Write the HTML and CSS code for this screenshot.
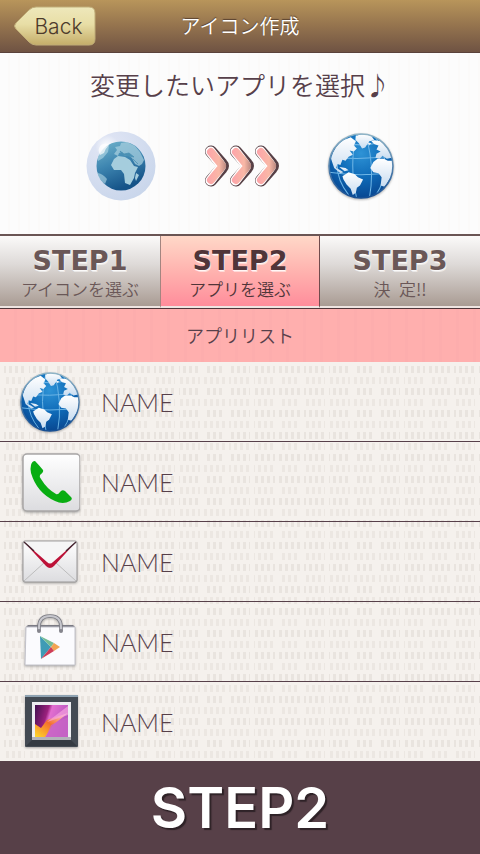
FILE: index.html
```html
<!DOCTYPE html>
<html lang="ja">
<head>
<meta charset="utf-8">
<meta name="viewport" content="width=device-width, initial-scale=1">
<title>アイコン作成</title>
<link rel="stylesheet" href="styles.css">
</head>
<body>
<svg class="defs" aria-hidden="true">
  <defs>
    <radialGradient id="sea" cx=".5" cy=".3" r=".75">
      <stop offset="0" stop-color="#2e93d6"/><stop offset=".5" stop-color="#0f6bb8"/><stop offset="1" stop-color="#07428c"/>
    </radialGradient>
    <linearGradient id="land" x2="0" y2="1">
      <stop offset="0" stop-color="#fff"/><stop offset="1" stop-color="#c8dcf0"/>
    </linearGradient>
    <linearGradient id="rim" x2="0" y2="1">
      <stop offset="0" stop-color="#8fb4c6"/><stop offset="1" stop-color="#164f94"/>
    </linearGradient>
    <clipPath id="disc"><circle cx="32" cy="32" r="31"/></clipPath>
    <symbol id="globe" viewBox="0 0 64 64">
      <circle cx="32" cy="32" r="31" fill="url(#sea)"/>
      <g clip-path="url(#disc)">
        <path d="M0 38Q32 43 64 38M2 23Q31 27 62 22M13 9Q32 14 51 9M28 0Q20 31 28 64M36 0Q46 32 40 64M18 4Q-1 34 20 60M46 4Q65 32 46 61" fill="none" stroke="#6fb6e6" stroke-width="1"/>
        <g fill="url(#land)">
          <path d="M3 25Q6 12 15 7L22 4L27 8L25 12L28 15L25 18L21 17L24 21L20 23L17 27L14 26L12 31L9 30L8 34L12 36L15 38L12 39L6 34L4 28Z"/>
          <path d="M27 3Q36-1 42 3L45 7L40 8L36 14L33 15L30 10L27 7Z"/>
          <path d="M14 42L20 38L26 40L29 43L34 45L31 51L28 53L27 58L24 60L22 54L18 50L15 45Z"/>
          <path d="M11 33L17 34L20 36L16 37Z"/>
          <path d="M45 7L52 8L59 17L62 24L57 25L53 22L50 25L46 24L47 20L51 18L47 16L49 12L45 11L42 8Z"/>
          <path d="M44 28L48 25L54 25L58 27L63 27L64 37L60 44L55 52L51 51L52 43L49 39L44 38L41 34Z"/>
          <path d="M38 9L42 10L40 12Z"/>
        </g>
      </g>
      <circle cx="32" cy="32" r="31" fill="none" stroke="url(#rim)" stroke-width="1.5"/>
    </symbol>

    <linearGradient id="sea2" x2=".4" y2="1">
      <stop offset="0" stop-color="#75b6cd"/><stop offset=".5" stop-color="#3e86b1"/><stop offset="1" stop-color="#155388"/>
    </linearGradient>
    <radialGradient id="halo" cx=".3" cy=".22" r=".85">
      <stop offset="0" stop-color="#fff"/><stop offset=".2" stop-color="#dde3f3"/><stop offset="1" stop-color="#c9d6eb"/>
    </radialGradient>
    <linearGradient id="arrow" gradientUnits="userSpaceOnUse" x1="2" y1="0" x2="24" y2="0">
      <stop offset="0" stop-color="#fda2aa"/><stop offset=".6" stop-color="#f9b8a6"/><stop offset="1" stop-color="#a77b76"/>
    </linearGradient>
    <linearGradient id="tile" x2="0" y2="1">
      <stop offset="0" stop-color="#fff"/><stop offset="1" stop-color="#dcdcdf"/>
    </linearGradient>
    <linearGradient id="photo" x1="0" x2="1" y2=".3">
      <stop offset="0" stop-color="#40104f"/><stop offset=".4" stop-color="#9b217d"/><stop offset=".5" stop-color="#e36ed0"/><stop offset="1" stop-color="#b958c0"/>
    </linearGradient>
    <linearGradient id="fire" x1="0" y1="1" x2="1" y2="0">
      <stop offset="0" stop-color="#ffd92b"/><stop offset=".5" stop-color="#f4702c"/><stop offset="1" stop-color="#ffd4e6"/>
    </linearGradient>
    <linearGradient id="metal" x2="0" y2="1">
      <stop offset="0" stop-color="#d3d3d8"/><stop offset="1" stop-color="#77777f"/>
    </linearGradient>
  </defs>
</svg>

<header class="topbar">
  <button class="back" type="button">
    <svg class="back-shape" viewBox="0 0 82 40" preserveAspectRatio="none" aria-hidden="true">
      <defs><linearGradient id="cream" x2="0" y2="1"><stop offset="0" stop-color="#eee8bb"/><stop offset=".45" stop-color="#e8dea6"/><stop offset="1" stop-color="#c4ad69"/></linearGradient></defs>
      <path d="M22 1H75Q81 1 81 7V33Q81 39 75 39H22Q18 39 15 36L2 23Q-1 20 2 17L15 4Q18 1 22 1Z" fill="url(#cream)" stroke="#c0ad78"/>
    </svg>
    <span class="back-label">Back</span>
  </button>
  <h1 class="title">アイコン作成</h1>
</header>

<main class="content">
  <section class="hero">
    <h2 class="prompt">変更したいアプリを選択♪</h2>
    <div class="preview">
      <svg class="preview-old" viewBox="0 0 70 70" role="img" aria-label="現在のアイコン">
        <circle cx="35" cy="35" r="34.5" fill="url(#halo)"/>
        <circle cx="35" cy="35" r="24.5" fill="url(#sea2)"/>
        <g fill="#a5cddd">
          <path d="M28 28L32 25L39 26L44 29L48 35L52 36L49 42L48 47L44 54L39 52L38 43L35 39L28 39L25 34Z"/>
          <path d="M28 23L31 19L29 16L34 15L35 12L41 11L49 15L54 21L58 29L56 33L53 35L49 33L46 27L42 24L39 25L36 21L33 22L32 25Z" opacity=".75"/>
          <path d="M50 42L53 44L50 50L49 47Z"/>
        </g>
        <path d="M34 20L38 23L43 22L48 26L43 25L37 24ZM47 28L52 33" fill="#4b91b4" stroke="#4b91b4" stroke-width=".8"/>
        <path d="M12 26Q14 20 19 16L23 15L22 21L17 27L12 30ZM12 42Q17 43 21 48L19 53Q13 49 11 41Z" fill="#b5dae8" opacity=".6"/>
        <path d="M14 24Q11 18 15 14Q20 11 23 14Q19 18 18 22Z" fill="#fff" opacity=".7"/>
      </svg>
      <svg class="preview-arrows" viewBox="0 0 76 42" aria-hidden="true">
        <defs>
          <g id="chevron">
            <path d="M7 6.500L18 19Q20 21 18 23L7 35.500" fill="none" stroke="#574046" stroke-width="12" stroke-linecap="round" stroke-linejoin="round"/>
            <path d="M6.500 6.500L16 19Q18 21 16 23L6.500 35.500" fill="none" stroke="#fff" stroke-width="10" stroke-linecap="round" stroke-linejoin="round"/>
            <path d="M7 7L17 19Q19 21 17 23L7 35" fill="none" stroke="url(#arrow)" stroke-width="8" stroke-linecap="round" stroke-linejoin="round"/>
          </g>
        </defs>
        <use href="#chevron"/><use href="#chevron" x="25"/><use href="#chevron" x="50"/>
      </svg>
      <svg class="preview-new shadowed" viewBox="0 0 64 64" role="img" aria-label="新しいアイコン"><use href="#globe"/></svg>
    </div>
  </section>

  <nav class="steps" aria-label="ステップ">
    <button class="step" type="button"><span class="step-name">STEP1</span><span class="step-text">アイコンを選ぶ</span></button>
    <button class="step step-active" type="button" aria-current="step"><span class="step-name">STEP2</span><span class="step-text">アプリを選ぶ</span></button>
    <button class="step" type="button"><span class="step-name">STEP3</span><span class="step-text">決&ensp;定!!</span></button>
  </nav>

  <section class="apps">
    <h2 class="apps-title">アプリリスト</h2>
    <ul class="app-list">
      <li><button class="app" type="button">
        <svg class="app-icon shadowed" viewBox="0 0 60 60" aria-hidden="true"><use href="#globe"/></svg>
        <span class="app-name">NAME</span></button></li>
      <li><button class="app" type="button">
        <svg class="app-icon shadowed" viewBox="0 0 60 60" aria-hidden="true">
          <rect x="3" y="2" width="57" height="57" rx="4" fill="url(#tile)" stroke="#a9a7a7" stroke-width="1.500"/>
          <path d="M11 13Q12 9 15 9Q18 12 23 18Q24 20 20 23Q19 25 21 27Q27 37 36 42Q38 43 40 40Q42 37 45 39L51 45Q53 47 50 49Q43 53 35 49Q17 41 11 21Q10 17 11 13Z" fill="#08ad12"/>
        </svg>
        <span class="app-name">NAME</span></button></li>
      <li><button class="app" type="button">
        <svg class="app-icon shadowed" viewBox="0 0 60 60" aria-hidden="true">
          <rect x="3" y="9" width="54" height="41" rx="2" fill="url(#tile)" stroke="#999797"/>
          <path d="M4 49L25 30M56 49L35 30" stroke="#bdbdbd"/>
          <path d="M4 10L26 32Q30 36 34 32L56 10Z" fill="#f6f6f6"/>
          <path d="M4 10L27 30Q30 33 33 30L56 10L34 34Q30 38 26 34Z" fill="#bd1238"/>
          <path d="M4 10L14 19M56 10L46 19" stroke="#462a34" stroke-width="1.500"/>
        </svg>
        <span class="app-name">NAME</span></button></li>
      <li><button class="app" type="button">
        <svg class="app-icon shadowed" viewBox="0 0 60 60" aria-hidden="true">
          <path d="M6 15L8 13H53L55 15Z" fill="#7b7b84"/>
          <path d="M6 15H55V53H5Z" fill="#fbfbfe" stroke="#c2c2ca"/>
          <path d="M19 19V15Q19 4 30 4Q41 4 41 15V19" fill="none" stroke="#77777f" stroke-width="3.500"/>
          <path d="M19 19V15Q19 4 30 4Q41 4 41 15V19" fill="none" stroke="#c6c6cc" stroke-width="2"/>
          <circle cx="19" cy="19" r="2" fill="#85858d"/><circle cx="41" cy="19" r="2" fill="#85858d"/>
          <path d="M20 24L31 35L21 47Z" fill="#3f9bb5"/>
          <path d="M20 24L34 31L31 35Z" fill="#75bc93"/>
          <path d="M34 31L40 35L34 39L31 35Z" fill="#f2a451"/>
          <path d="M21 47L31 35L34 39Z" fill="#cf3e58"/>
        </svg>
        <span class="app-name">NAME</span></button></li>
      <li><button class="app" type="button">
        <svg class="app-icon shadowed" viewBox="0 0 60 60" aria-hidden="true">
          <rect x="5" y="3" width="53" height="52" rx="1" fill="#434a53"/>
          <path d="M5 4H58" stroke="#8fa3b2" stroke-width="2"/>
          <path d="M6 54L13 47H50L57 54Z" fill="#343a42"/>
          <rect x="12" y="10" width="39" height="38" fill="#ededf1"/>
          <path d="M12 48H51V45H12Z" fill="#b2b2b9"/>
          <rect x="15" y="13" width="33" height="32" fill="url(#photo)"/>
          <path d="M15 45V32L21 36L27 28L48 21L34 32L25 45Z" fill="url(#fire)"/>
          <path d="M27 30L48 14V23Z" fill="#f7a1de" opacity=".7"/>
          <path d="M26 45L31 33L48 25V45Z" fill="#c865c5" opacity=".8"/>
        </svg>
        <span class="app-name">NAME</span></button></li>
    </ul>
  </section>
</main>

<footer class="footer">STEP2</footer>
</body>
</html>
```
FILE: styles.css
```css
* {
  box-sizing: border-box;
}

body {
  margin: 0;
  min-height: 100vh;
  display: flex;
  flex-direction: column;
  font-family: "Noto Sans CJK JP", sans-serif;
  font-weight: 350;
  color: #57404a;
  background: #f5f1ed;
}

button {
  margin: 0;
  padding: 0;
  border: 0;
  background: none;
  font: inherit;
  color: inherit;
  cursor: pointer;
}

h1, h2 {
  margin: 0;
  font-weight: 350;
}

.defs {
  position: absolute;
  width: 0;
  height: 0;
}

.topbar {
  display: grid;
  grid-template-columns: 1fr auto 1fr;
  align-items: center;
  height: 53px;
  padding: 0 14px;
  background: linear-gradient(#b8955b, #94734e 50%, #6f5343);
  border-bottom: 1px solid #5a423b;
}

.back {
  position: relative;
  justify-self: start;
  width: 82px;
  height: 40px;
  padding-left: 7px;
}

.back-shape {
  position: absolute;
  inset: 0;
  width: 100%;
  height: 100%;
}

.back-label {
  position: relative;
  font-family: Inter, sans-serif;
  font-weight: 300;
  font-size: 21px;
  color: #4d3b2c;
}

.title {
  font-size: 20px;
  line-height: 30px;
  color: #fff;
  text-shadow: 0 -1px 1px #57402f;
}

.hero {
  height: 181px;
  padding-top: 12px;
  background: repeating-linear-gradient(90deg, #fcfcfc 0 8px, #fbfaf9 8px 10px);
}

.prompt {
  font-size: 25px;
  line-height: 38px;
  text-align: center;
}

.preview {
  display: flex;
  align-items: center;
  justify-content: center;
  gap: 48px;
  height: 126px;
}

.preview-old {
  width: 70px;
  height: 70px;
}

.preview-new {
  width: 66px;
  height: 66px;
}

.preview-arrows {
  width: 76px;
  height: 42px;
}

.shadowed {
  filter: drop-shadow(0 1px 1px #77777799);
}

.steps {
  display: grid;
  grid-template-columns: repeat(3, 1fr);
  border-top: 2px solid #6a5554;
  border-bottom: 1px solid #4f3539;
}

.step {
  display: flex;
  flex-direction: column;
  align-items: center;
  height: 72px;
  padding-top: 9px;
  color: #6a5757;
  background: linear-gradient(#fbfaf9, #dedad8 40%, #a99b93);
  border-bottom: 2px solid #eee5e2;
}

.step-active {
  color: #503539;
  background: linear-gradient(#ffd8c8, #ffb3af 50%, #ff8d9b);
  border-left: 1px solid #a38580;
  border-right: 1px solid #704b4d;
}

.step-name {
  font-family: "DejaVu Sans", sans-serif;
  font-weight: 700;
  font-size: 27px;
  line-height: 31px;
  text-shadow: 0 1px 0 #ffffffcc, 1px 2px 0 #ffffff88;
}

.step-text {
  font-size: 17px;
  line-height: 26px;
}

.apps-title {
  height: 53px;
  font-size: 18px;
  line-height: 53px;
  text-align: center;
  background: repeating-linear-gradient(90deg, #ffafae 0 14px, #fdadad 14px 17px);
}

.app-list {
  margin: 0;
  padding: 0;
  list-style: none;
  background:
    linear-gradient(90deg, #f5f1ed 4px, transparent 4px) 0 0 / 25px 100%,
    conic-gradient(from 90deg at 3px 7px, transparent 75%, #e9e4df 0) 0 4px / 6px 22px,
    conic-gradient(from 90deg at 3px 7px, transparent 75%, #ece7e2 0) 3px 15px / 6px 22px;
}

.app {
  display: flex;
  align-items: center;
  gap: 21px;
  width: 100%;
  height: 80px;
  padding: 0 20px;
  text-align: left;
  border-bottom: 1px solid #57404a;
}

.app-list li:last-child .app {
  height: 79px;
  border-bottom: 0;
}

.app-icon {
  width: 60px;
  height: 60px;
}

.app-name {
  font-family: Lato, sans-serif;
  font-weight: 300;
  font-size: 25px;
  line-height: 30px;
}

.footer {
  flex: 1;
  display: flex;
  align-items: center;
  justify-content: center;
  min-height: 93px;
  font-family: Inter, sans-serif;
  font-weight: 600;
  font-size: 56px;
  line-height: 60px;
  color: #fff;
  background: #574048;
  text-shadow: 2px 2px 1px #2e2227;
}
```
